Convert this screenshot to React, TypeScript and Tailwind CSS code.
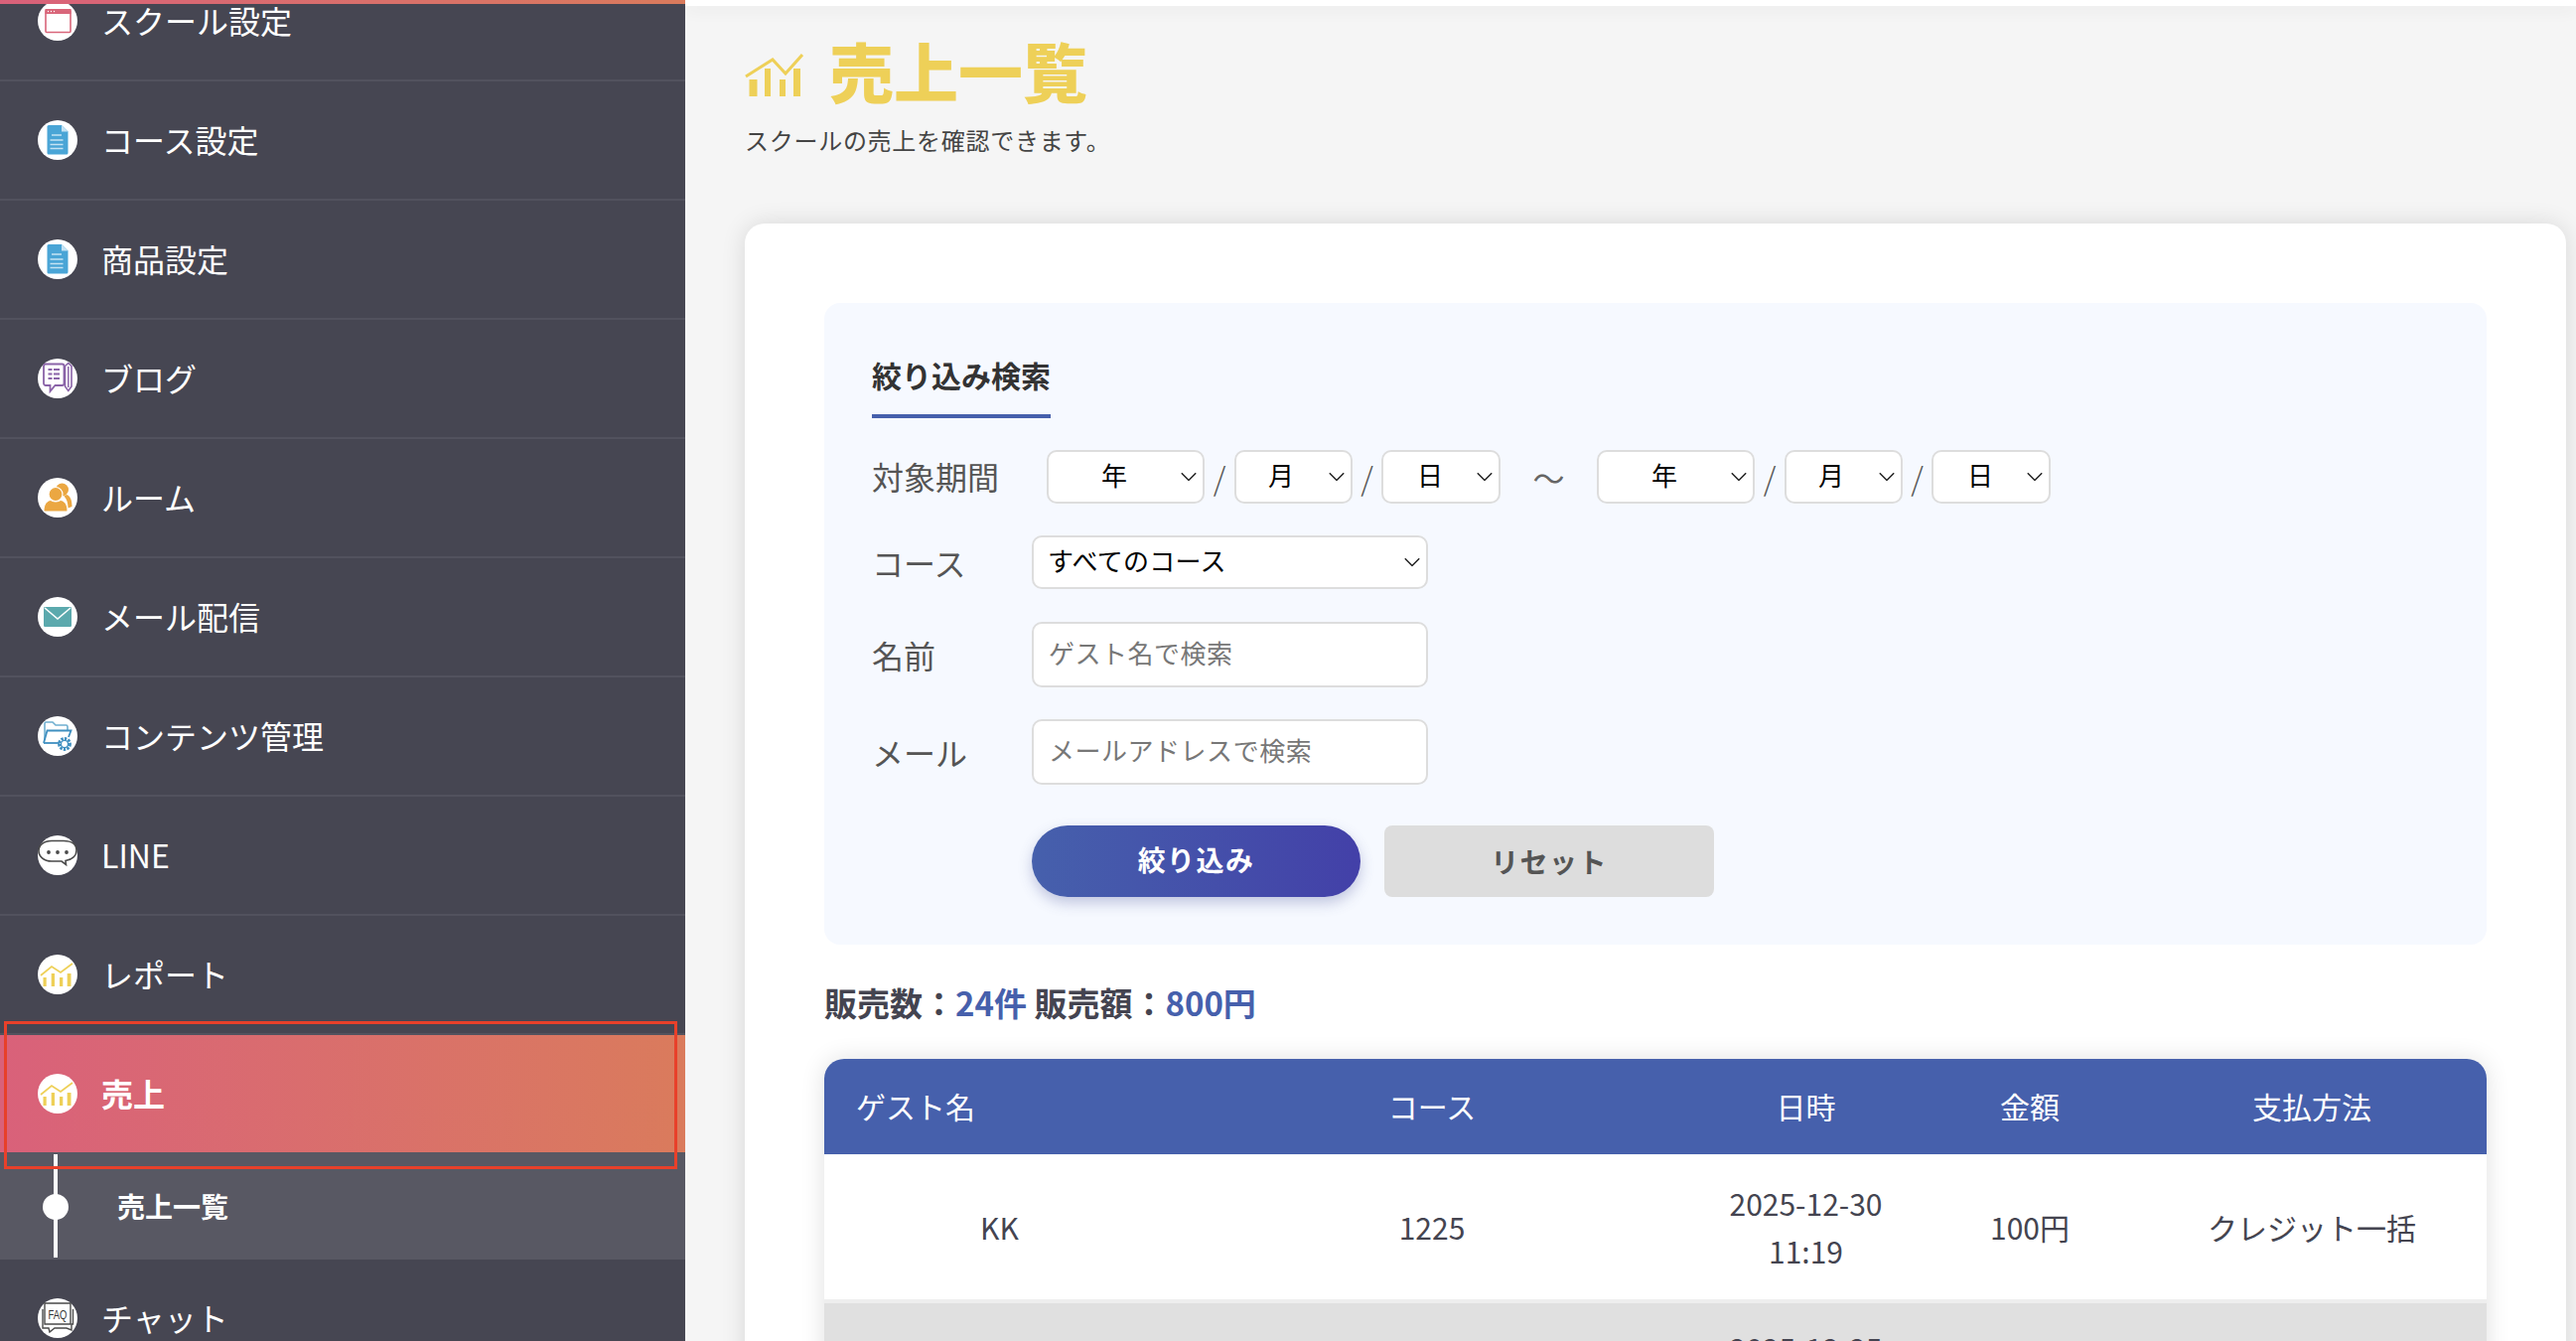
import { ReactNode } from "react";

const FONT = "[font-family:'Noto_Sans_CJK_JP','Noto_Sans',sans-serif]";

const IconCircle = ({ children }: { children: ReactNode }) => (
  <span className="flex size-10 shrink-0 items-center justify-center rounded-full bg-white">
    <svg viewBox="0 0 40 40" className="size-10">
      {children}
    </svg>
  </span>
);

const WindowIcon = () => (
  <IconCircle>
    <rect x="8" y="9" width="25" height="22.5" fill="#fff" stroke="#d9667a" strokeWidth="1.6" rx="1" />
    <rect x="7.5" y="8" width="26" height="5" fill="#d9667a" />
    <circle cx="10.5" cy="10.5" r=".7" fill="#fff" />
    <circle cx="13.5" cy="10.5" r=".7" fill="#fff" />
    <circle cx="16.5" cy="10.5" r=".7" fill="#fff" />
  </IconCircle>
);

const DocIcon = () => (
  <IconCircle>
    <path d="M11 5h13l6.500 6.500V33a1.500 1.500 0 0 1-1.500 1.500H11A1.500 1.500 0 0 1 9.500 33V6.500A1.500 1.500 0 0 1 11 5z" fill="#4aa5d6" />
    <path d="M24 5v6.500h6.500z" fill="#c5e3f3" />
    <path d="M14 15h10M12.500 20h13M12.500 24.500h13M12.500 28.500h13" stroke="#c5e3f3" strokeWidth="1.500" />
  </IconCircle>
);

const BlogIcon = () => (
  <IconCircle>
    <path d="M8 5.500h16.500a2 2 0 0 1 2 2V25a2 2 0 0 1-2 2H17.500l-5 6v-6H8a2 2 0 0 1-2-2V7.500a2 2 0 0 1 2-2z" fill="none" stroke="#8a63a8" strokeWidth="1.800" />
    <path d="M10.500 11h4M16 11h6M10.500 15.500h4M16 15.500h6M10.500 20h4M16 20h6" stroke="#8a63a8" strokeWidth="2.200" />
    <path d="M27.500 7.500l3.300-3 3.200 3V28l-3.200 4.500L27.500 28z" fill="#fff" stroke="#8a63a8" strokeWidth="1.600" />
    <path d="M30.800 8v21" stroke="#8a63a8" strokeWidth="1.500" />
  </IconCircle>
);

const PeopleIcon = () => (
  <IconCircle>
    <circle cx="24.500" cy="12" r="6.500" fill="#eba742" />
    <path d="M29 17c4 1 5.500 6 5.500 12l-4 1.500c0-5-1-9-4-12z" fill="#eba742" />
    <circle cx="18" cy="16.500" r="7" fill="#eba742" stroke="#fff" strokeWidth="1.200" />
    <path d="M6 33c0-6 3-10 7-10.500 3 2 7 2 10 0 4 .5 7 4.500 7 10.500 0 .5-.5 1-1 1H7c-.5 0-1-.5-1-1z" fill="#eba742" stroke="#fff" strokeWidth="1" />
  </IconCircle>
);

const MailIcon = () => (
  <IconCircle>
    <rect x="6" y="10" width="28" height="20" rx="1.200" fill="#5ba9ad" />
    <path d="M7 11l13 11 13-11" fill="none" stroke="#fff" strokeWidth="1.600" />
  </IconCircle>
);

const FolderIcon = () => (
  <IconCircle>
    <path d="M7 24V7.500A1.500 1.500 0 0 1 8.500 6H15l3 3h10.500A1.500 1.500 0 0 1 30 10.500V14" fill="none" stroke="#6fafd0" strokeWidth="1.600" />
    <path d="M6 27l3.500-12.500h24L31 21" fill="none" stroke="#3f8fc0" strokeWidth="1.800" />
    <path d="M6 27h16" stroke="#3f8fc0" strokeWidth="1.800" />
    <circle cx="27" cy="28" r="5.500" fill="none" stroke="#3f8fc0" strokeWidth="2.800" strokeDasharray="2.400 1.200" />
    <circle cx="27" cy="28" r="3.600" fill="#fff" stroke="#3f8fc0" strokeWidth="1.400" />
  </IconCircle>
);

const LineIcon = () => (
  <IconCircle>
    <path d="M14 5.500h12c8 0 13 3.500 13 9.500s-5 9.500-11 10.500l.500 4-4.500-3.500H14C6 26 1 21 1 15.500S6 5.500 14 5.500z" fill="#fff" stroke="#4a4a4a" strokeWidth="1.600" />
    <circle cx="11" cy="17" r="1.900" fill="#4a4a4a" />
    <circle cx="20" cy="17" r="1.900" fill="#4a4a4a" />
    <circle cx="29" cy="17" r="1.900" fill="#4a4a4a" />
  </IconCircle>
);

const ChartIcon = () => (
  <IconCircle>
    <path d="M3 21l11-9 9 6 12-9" fill="none" stroke="#eed058" strokeWidth="1.800" />
    <path d="M5.500 23h3.200v9H5.500zM13.700 19H17v13h-3.300zM22 23h3.300v9H22zM29.700 19H33.500v13h-3.800z" fill="#eed058" />
  </IconCircle>
);

const FaqIcon = () => (
  <IconCircle>
    <path d="M7 5h26v21H7z" fill="#fff" stroke="#4a4a4a" strokeWidth="1.400" />
    <path d="M5 11v19h6l1 4 5-4h12l5 2v-6h1.500V11" fill="none" stroke="#4a4a4a" strokeWidth="1.400" />
    <text x="20" y="21" textAnchor="middle" fontSize="12" fill="#333" fontFamily="'Liberation Sans', sans-serif" textLength="19" lengthAdjust="spacingAndGlyphs">
      FAQ
    </text>
  </IconCircle>
);

const NavItem = ({ icon, label }: { icon: ReactNode; label: string }) => (
  <div className="flex h-[120px] shrink-0 items-center border-b-2 border-[#52525e] pl-[38px]">
    {icon}
    <span className="ml-6 pb-[2px] text-[32px] leading-none text-white">{label}</span>
  </div>
);

const Sidebar = () => (
  <aside className="relative h-full w-[690px] shrink-0 overflow-hidden bg-[#464652]">
    <div className="absolute inset-x-0 top-0 z-10 h-1 bg-gradient-to-r from-[#d9617a] to-[#da7b5c]" />
    <div className="-mt-[38px] flex flex-col">
      <NavItem icon={<WindowIcon />} label="スクール設定" />
      <NavItem icon={<DocIcon />} label="コース設定" />
      <NavItem icon={<DocIcon />} label="商品設定" />
      <NavItem icon={<BlogIcon />} label="ブログ" />
      <NavItem icon={<PeopleIcon />} label="ルーム" />
      <NavItem icon={<MailIcon />} label="メール配信" />
      <NavItem icon={<FolderIcon />} label="コンテンツ管理" />
      <NavItem icon={<LineIcon />} label="LINE" />
      <NavItem icon={<ChartIcon />} label="レポート" />
      <div className="flex h-[118px] shrink-0 items-center bg-gradient-to-r from-[#d9617a] to-[#da7b5c] pl-[38px]">
        <ChartIcon />
        <span className="ml-6 pb-[2px] text-[32px] leading-none font-bold text-white">売上</span>
      </div>
      <div className="relative flex h-[108px] shrink-0 items-center bg-[#585863] pl-[118px]">
        <span className="absolute top-[2px] left-[54px] h-[104px] w-1 bg-white" />
        <span className="absolute top-[42px] left-[43px] size-[26px] rounded-full bg-white" />
        <span className="text-[28px] leading-none font-bold text-white">売上一覧</span>
      </div>
      <NavItem icon={<FaqIcon />} label="チャット" />
    </div>
    <div className="absolute top-[1028px] left-1 h-[149px] w-[678px] border-[3px] border-[#e8402a]" />
  </aside>
);

const Chevron = () => (
  <svg viewBox="0 0 16 9" className="pointer-events-none absolute top-1/2 right-2 h-[9px] w-4 -translate-y-1/2" fill="none" stroke="#222" strokeWidth="1.500">
    <path d="M.8.8 8 8 15.200.8" />
  </svg>
);

const DateSelect = ({ label, width, pad }: { label: string; width: string; pad: string }) => (
  <div className={`relative h-[54px] ${width}`}>
    <select className={`h-full w-full appearance-none rounded-[10px] border-2 border-[#dddddd] bg-white pb-[6px] text-[26px] text-black ${pad}`}>
      <option>{label}</option>
    </select>
    <Chevron />
  </div>
);

const Slash = ({ width }: { width: string }) => <span className={`text-center text-[32px] leading-none font-light text-[#555] ${width}`}>/</span>;

const DateGroup = () => (
  <div className="flex items-center">
    <DateSelect label="年" width="w-[159px]" pad="pl-[53px]" />
    <Slash width="w-[30px]" />
    <DateSelect label="月" width="w-[119px]" pad="pl-[32px]" />
    <Slash width="w-[29px]" />
    <DateSelect label="日" width="w-[120px]" pad="pl-[34px]" />
  </div>
);

const FieldLabel = ({ children, className }: { children: ReactNode; className: string }) => (
  <span className={`shrink-0 text-[32px] leading-none text-[#555] ${className}`}>{children}</span>
);

const TextField = ({ placeholder }: { placeholder: string }) => (
  <input
    placeholder={placeholder}
    className="h-[66px] w-[399px] rounded-[10px] border-2 border-[#dddddd] bg-white px-[15px] pb-[6px] text-[26px] tracking-[0.02em] placeholder:text-[#777]"
  />
);

const SearchPanel = () => (
  <section className="rounded-2xl bg-[#f6f9ff] px-12 pt-[52px] pb-12">
    <h2 className="inline-block border-b-4 border-[#4660ac] pb-5 text-[30px] leading-10 font-bold text-[#333]">絞り込み検索</h2>
    <div className="mt-8 flex items-center">
      <FieldLabel className="mb-[2px] w-[176px]">対象期間</FieldLabel>
      <DateGroup />
      <span className="w-[97px] text-center text-[32px] leading-none text-[#666]">〜</span>
      <DateGroup />
    </div>
    <div className="mt-8 flex items-center">
      <FieldLabel className="w-[161px]">コース</FieldLabel>
      <div className="relative h-[54px] w-[399px]">
        <select className="h-full w-full appearance-none rounded-[10px] border-2 border-[#dddddd] bg-white pb-[6px] pl-[14px] text-[26px] tracking-[0.01em] text-black">
          <option>すべてのコース</option>
        </select>
        <Chevron />
      </div>
    </div>
    <div className="mt-[33px] flex items-center">
      <FieldLabel className="w-[161px]">名前</FieldLabel>
      <TextField placeholder="ゲスト名で検索" />
    </div>
    <div className="mt-8 flex items-center">
      <FieldLabel className="w-[161px]">メール</FieldLabel>
      <TextField placeholder="メールアドレスで検索" />
    </div>
    <div className="mt-[41px] flex gap-6 pl-[161px]">
      <button className="h-[72px] w-[331px] rounded-full bg-gradient-to-r from-[#4660ac] to-[#4340a8] pb-1 text-[28px] font-bold tracking-[0.05em] text-white shadow-[0_6px_14px_rgba(70,80,150,0.3)]">
        絞り込み
      </button>
      <button className="h-[72px] w-[332px] rounded-lg bg-[#dddddd] text-[28px] font-bold tracking-[0.05em] text-[#555]">リセット</button>
    </div>
  </section>
);

const SalesTable = () => (
  <div className="mt-[33px] overflow-hidden rounded-t-[20px] shadow-[0_0_24px_rgba(0,0,0,0.12)]">
    <table className="w-full table-fixed border-collapse text-center text-[30px] text-[#444450]">
      <colgroup>
        <col className="w-[353px]" />
        <col className="w-[518px]" />
        <col className="w-[235px]" />
        <col className="w-[216px]" />
        <col className="w-[352px]" />
      </colgroup>
      <thead>
        <tr className="h-24 bg-[#4660ac] text-white [&>th]:pb-[2px]">
          <th className="pl-8 text-left font-normal">ゲスト名</th>
          <th className="font-normal">コース</th>
          <th className="font-normal">日時</th>
          <th className="font-normal">金額</th>
          <th className="font-normal">支払方法</th>
        </tr>
      </thead>
      <tbody className="leading-12">
        <tr className="h-[148px] border-b-4 border-[#eeeeee] bg-white [&>td]:pb-[1px]">
          <td>KK</td>
          <td>1225</td>
          <td>
            2025-12-30
            <br />
            11:19
          </td>
          <td>100円</td>
          <td>クレジット一括</td>
        </tr>
        <tr className="h-[148px] bg-[#e0e0e0]">
          <td />
          <td />
          <td className="pt-[21px] align-top">2025-12-25</td>
          <td />
          <td />
        </tr>
      </tbody>
    </table>
  </div>
);

export default function App() {
  return (
    <div className={`flex h-[1350px] w-[2594px] overflow-hidden bg-[#f5f5f5] ${FONT}`}>
      <Sidebar />
      <main className="flex min-w-0 flex-1 flex-col">
        <div className="h-[6px] shrink-0 bg-white shadow-[0_4px_16px_rgba(0,0,0,0.07)]" />
        <div className="pt-[31px] pr-[10px] pl-[60px]">
          <div className="flex h-[66px] items-center gap-[26px]">
            <svg viewBox="0 0 59 43" className="mt-[11px] h-[43px] w-[59px]">
              <path d="M1 23 28 6l13 14L58 1" fill="none" stroke="#eed058" strokeWidth="3" />
              <path d="M4.500 26h8v17h-8zM20 15h6v28h-6zM35 26h6v17h-6zM49 15h7v28h-7z" fill="#eed058" />
            </svg>
            <h1 className="text-[65px] leading-[66px] font-black text-[#eed058]">売上一覧</h1>
          </div>
          <p className="mt-5 text-2xl leading-9 tracking-[0.03em] text-[#444]">スクールの売上を確認できます。</p>
          <div className="mt-[66px] h-[1200px] rounded-[20px] bg-white px-20 pt-20 shadow-[0_0_24px_rgba(0,0,0,0.12)]">
            <SearchPanel />
            <p className="mt-[34px] text-[33px] leading-12 font-bold text-[#444450]">
              販売数：<span className="text-[#4660ac]">24件</span> 販売額：<span className="text-[#4660ac]">800円</span>
            </p>
            <SalesTable />
          </div>
        </div>
      </main>
    </div>
  );
}
